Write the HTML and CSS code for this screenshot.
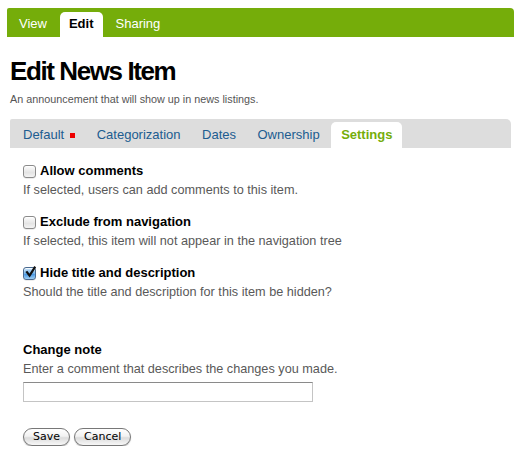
FILE: index.html
```html
<!DOCTYPE html>
<html>
<head>
<meta charset="utf-8">
<link rel="stylesheet" href="styles.css">
</head>
<body>
<div class="editbar">
  <a class="etab">View</a>
  <a class="etab active">Edit</a>
  <a class="etab">Sharing</a>
</div>
<h1 class="title">Edit News Item</h1>
<p class="lead">An announcement that will show up in news listings.</p>
<div class="subtabs">
  <a class="stab">Default <span class="req"></span></a>
  <a class="stab">Categorization</a>
  <a class="stab">Dates</a>
  <a class="stab">Ownership</a>
  <a class="stab active">Settings</a>
</div>
<form class="form">
  <div class="field">
    <label class="cblabel"><span class="cb"></span>Allow comments</label>
    <div class="help">If selected, users can add comments to this item.</div>
  </div>
  <div class="field">
    <label class="cblabel"><span class="cb"></span>Exclude from navigation</label>
    <div class="help">If selected, this item will not appear in the navigation tree</div>
  </div>
  <div class="field">
    <label class="cblabel"><span class="cb checked"><svg viewBox="0 0 13 13" width="13" height="13"><path d="M3 6.2 L5.6 9.6 L10.6 1.6" fill="none" stroke="#111" stroke-width="2.2" stroke-linecap="square"/></svg></span>Hide title and description</label>
    <div class="help">Should the title and description for this item be hidden?</div>
  </div>
  <div class="field note">
    <div class="label">Change note</div>
    <div class="help">Enter a comment that describes the changes you made.</div>
    <input class="text" type="text">
  </div>
  <div class="buttons">
    <button type="button" class="btn">Save</button>
    <button type="button" class="btn">Cancel</button>
  </div>
</form>
</body>
</html>
```
FILE: styles.css
```css
html, body {
  margin: 0;
  padding: 0;
  background: #fff;
  font-family: "Liberation Sans", Arial, sans-serif;
  color: #000;
}
.editbar {
  margin: 8px 13px 0 7px;
  height: 29px;
  background: #75ad0a;
  border-radius: 2px 4px 0 0;
  display: flex;
  align-items: flex-end;
  padding-left: 3px;
  box-sizing: border-box;
}
.etab {
  display: block;
  height: 25px;
  line-height: 24px;
  padding: 0 9px;
  margin-right: 4px;
  font-size: 13px;
  color: #fff;
  border-radius: 5px 5px 0 0;
}
.etab.active {
  background: #fff;
  color: #000;
  font-weight: bold;
}
.title {
  margin: 19px 0 0 10px;
  font-size: 26px;
  line-height: 30px;
  letter-spacing: -1.4px;
  font-weight: bold;
}
.lead {
  margin: 6px 0 0 10px;
  font-size: 10.8px;
  line-height: 14px;
  color: #555;
}
.subtabs {
  margin: 13px 16px 0 10px;
  height: 29px;
  background: #dddddd;
  border-radius: 2px 5px 0 0;
  display: flex;
  align-items: flex-end;
  padding-left: 3px;
  box-sizing: border-box;
}
.stab {
  display: flex;
  align-items: center;
  height: 26px;
  padding: 0 10px;
  margin-right: 1.5px;
  font-size: 13px;
  color: #205c90;
  border-radius: 5px 5px 0 0;
  line-height: 20px;
}
.stab .req {
  display: inline-block;
  width: 5px;
  height: 5px;
  background: #e00;
  margin-left: 6px;
}
.stab.active {
  background: #fff;
  color: #75ad0a;
  font-weight: bold;
}
.form {
  margin: 14px 0 0 23px;
}
.field {
  margin-bottom: 13px;
}
.cblabel {
  display: flex;
  align-items: center;
  font-weight: bold;
  font-size: 13px;
  line-height: 18px;
}
.cb {
  display: inline-block;
  width: 11px;
  height: 11px;
  border: 1px solid #8b8b8b;
  border-radius: 3px;
  background: linear-gradient(#fdfdfd, #e4e4e4 60%, #f4f4f4);
  box-shadow: inset 0 1px 1px rgba(255,255,255,0.9), 0 0.5px 0.5px rgba(0,0,0,0.15);
  margin-right: 4px;
  position: relative;
}
.cb.checked {
  background: linear-gradient(#cde6fb, #6fb1ea 50%, #3b8ee0 51%, #9fd0f6);
  border-color: #4a6a90;
}
.cb svg {
  position: absolute;
  left: 0;
  top: -2px;
}
.help {
  font-size: 12.7px;
  line-height: 19px;
  padding-top: 1px;
  color: #595959;
}
.note {
  margin-top: 39px;
}
.label {
  font-weight: bold;
  font-size: 13px;
  line-height: 18px;
}
.text {
  display: block;
  width: 290px;
  height: 20px;
  box-sizing: border-box;
  border: 1px solid #c4c4c4;
  border-top-color: #8a8a8a;
  margin: 3px 0 0 0;
  padding: 0;
  background: #fff;
}
.buttons {
  display: flex;
  gap: 4px;
  margin-top: 26px;
}
.btn {
  height: 18px;
  padding: 0 9px;
  border: 1px solid #777;
  border-radius: 9px;
  background: linear-gradient(#ffffff, #f2f2f2 45%, #dcdcdc 55%, #f7f7f7);
  box-shadow: 0 1px 1px rgba(0,0,0,0.25);
  font-family: "DejaVu Sans", sans-serif;
  font-size: 11px;
  line-height: 16px;
  color: #000;
}
```
